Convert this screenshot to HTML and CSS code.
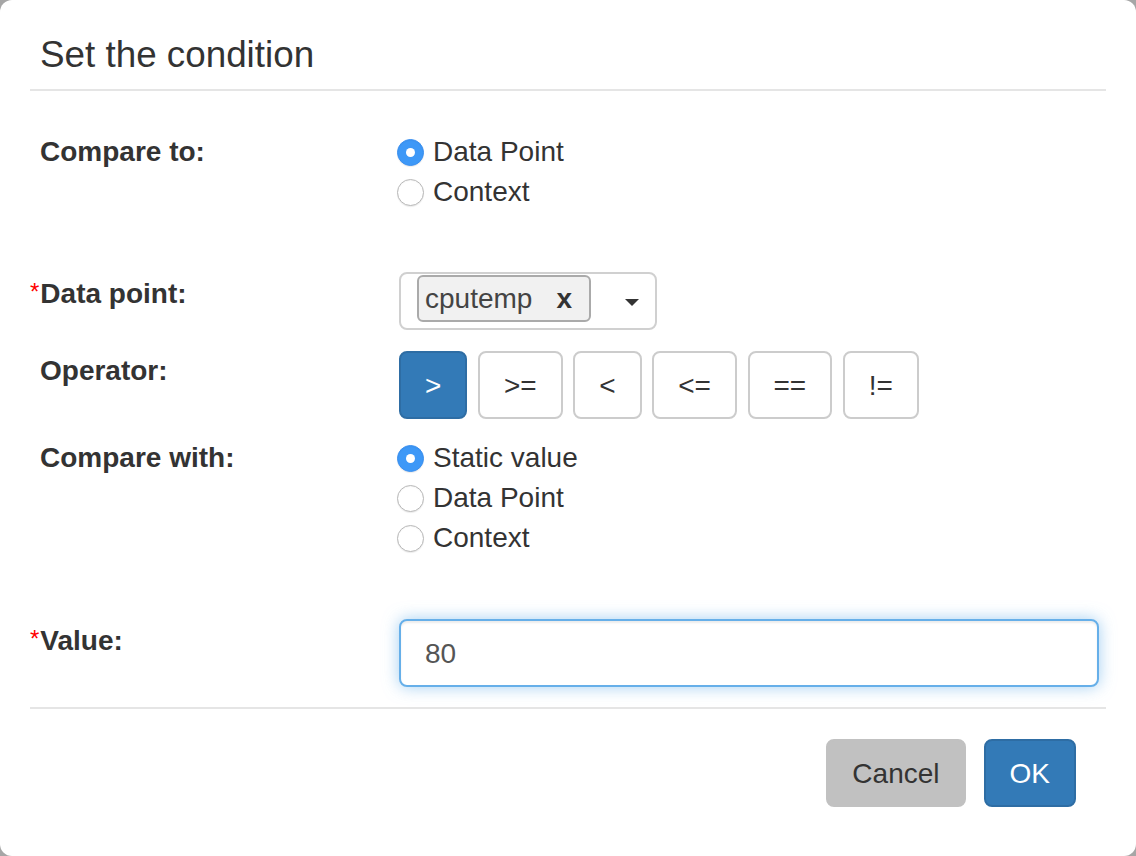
FILE: index.html
```html
<!DOCTYPE html>
<html>
<head>
<meta charset="utf-8">
<title>Set the condition</title>
<link rel="stylesheet" href="styles.css">
</head>
<body>
<div class="modal">
  <div class="modal-header">
    <h4 class="modal-title">Set the condition</h4>
  </div>
  <div class="modal-body">
    <div class="form-row row-radio">
      <div class="form-label">Compare to:</div>
      <div class="control">
        <label class="radio"><span class="radio-dot checked"></span>Data Point</label>
        <label class="radio"><span class="radio-dot"></span>Context</label>
      </div>
    </div>
    <div class="form-row row-select">
      <div class="form-label"><span class="req">*</span>Data point:</div>
      <div class="control">
        <div class="select">
          <span class="tag"><span class="tag-text">cputemp</span><b class="tag-x">x</b></span>
          <span class="caret"></span>
        </div>
      </div>
    </div>
    <div class="form-row row-ops">
      <div class="form-label">Operator:</div>
      <div class="control ops">
        <button class="btn btn-primary">&gt;</button>
        <button class="btn">&gt;=</button>
        <button class="btn">&lt;</button>
        <button class="btn">&lt;=</button>
        <button class="btn">==</button>
        <button class="btn">!=</button>
      </div>
    </div>
    <div class="form-row row-radio">
      <div class="form-label">Compare with:</div>
      <div class="control">
        <label class="radio"><span class="radio-dot checked"></span>Static value</label>
        <label class="radio"><span class="radio-dot"></span>Data Point</label>
        <label class="radio"><span class="radio-dot"></span>Context</label>
      </div>
    </div>
    <div class="form-row row-value">
      <div class="form-label"><span class="req">*</span>Value:</div>
      <div class="control">
        <input class="text-input" type="text" value="80">
      </div>
    </div>
  </div>
  <div class="modal-footer">
    <button class="btn btn-cancel">Cancel</button>
    <button class="btn btn-primary">OK</button>
  </div>
</div>
</body>
</html>
```
FILE: styles.css
```css
html, body {
  margin: 0;
  padding: 0;
  height: 100%;
}
body {
  background: #a6a6a6;
  font-family: "Liberation Sans", Arial, Helvetica, sans-serif;
  color: #333;
}
.modal {
  box-sizing: border-box;
  width: 1136px;
  height: 856px;
  background: #fff;
  border-radius: 12px;
  overflow: hidden;
  display: flex;
  flex-direction: column;
}
.modal-header {
  margin: 0 30px;
  padding: 35px 0 14px 10px;
  border-bottom: 2px solid #e5e5e5;
}
.modal-title {
  margin: 0;
  font-size: 36.8px;
  line-height: 40px;
  font-weight: normal;
  color: #333;
}
.modal-body {
  padding: 41px 30px 0;
}
.form-row {
  display: grid;
  grid-template-columns: 369px 700px;
}
.form-label {
  padding-left: 10px;
  font-size: 28px;
  line-height: 40px;
  font-weight: bold;
  color: #333;
}
.req {
  color: #f00;
  font-weight: normal;
  font-size: 24px;
  vertical-align: 3px;
  margin-left: -10px;
  margin-right: 1px;
}
.row-radio { margin-bottom: 61px; }
.row-radio:first-child { margin-bottom: 60px; }
.row-select { margin-bottom: 21px; }
.row-ops { margin-bottom: 19px; }

.radio {
  display: flex;
  align-items: center;
  height: 40px;
  font-size: 28px;
  line-height: 40px;
  color: #333;
}
.radio-dot {
  box-sizing: border-box;
  width: 27px;
  height: 27px;
  margin: 1px 9px 0 -2px;
  border-radius: 50%;
  background: #fff;
  border: 1.5px solid #b8b8b8;
  box-shadow: inset 0 1px 1px rgba(0,0,0,0.04), 0 1px 1px rgba(0,0,0,0.08);
  display: flex;
  align-items: center;
  justify-content: center;
  flex: none;
}
.radio-dot.checked {
  background: #3d98f7;
  border-color: #3a8ff0;
}
.radio-dot.checked::after {
  content: "";
  width: 9px;
  height: 9px;
  border-radius: 50%;
  background: #fff;
}

.select {
  box-sizing: border-box;
  width: 258px;
  height: 58px;
  border: 2px solid #d0d0d0;
  border-radius: 8px;
  display: flex;
  align-items: flex-start;
  background: #fff;
}
.tag {
  box-sizing: border-box;
  height: 47px;
  margin: 1px 0 0 16px;
  padding: 1px 17px 0 6px;
  border: 2px solid #aaa;
  border-radius: 6px;
  background: #f1f1f1;
  display: flex;
  align-items: center;
  font-size: 28px;
  line-height: 42px;
  color: #444;
}
.tag-x {
  margin-left: 24px;
  font-weight: bold;
  color: #333;
}
.caret {
  width: 0;
  height: 0;
  margin: 25px 16px 0 auto;
  border-top: 7px solid #333;
  border-left: 7px solid transparent;
  border-right: 7px solid transparent;
}

.ops {
  display: flex;
  gap: 10.6px;
}
.btn {
  box-sizing: border-box;
  height: 68px;
  padding: 13px 24px 11px;
  font-family: "Liberation Sans", Arial, Helvetica, sans-serif;
  font-size: 28px;
  line-height: 40px;
  color: #333;
  background: #fff;
  border: 2px solid #ccc;
  border-radius: 8px;
  margin: 0;
}
.btn-primary {
  background: #337ab7;
  border-color: #2e6da4;
  color: #fff;
}
.btn-cancel {
  background: #c1c1c1;
  border-color: #c1c1c1;
  color: #333;
}

.text-input {
  box-sizing: border-box;
  display: block;
  width: 700px;
  height: 68px;
  margin: 0;
  padding: 2px 24px 0;
  font-family: "Liberation Sans", Arial, Helvetica, sans-serif;
  font-size: 28px;
  color: #555;
  background: #fff;
  border: 2px solid #66afe9;
  border-radius: 8px;
  outline: none;
  box-shadow: inset 0 2px 2px rgba(0,0,0,0.075), 0 0 16px rgba(102,175,233,0.6);
}

.modal-footer {
  margin: 20px 30px 0;
  padding: 30px 30px 0 0;
  border-top: 2px solid #e5e5e5;
  display: flex;
  justify-content: flex-end;
  gap: 18px;
}
```
